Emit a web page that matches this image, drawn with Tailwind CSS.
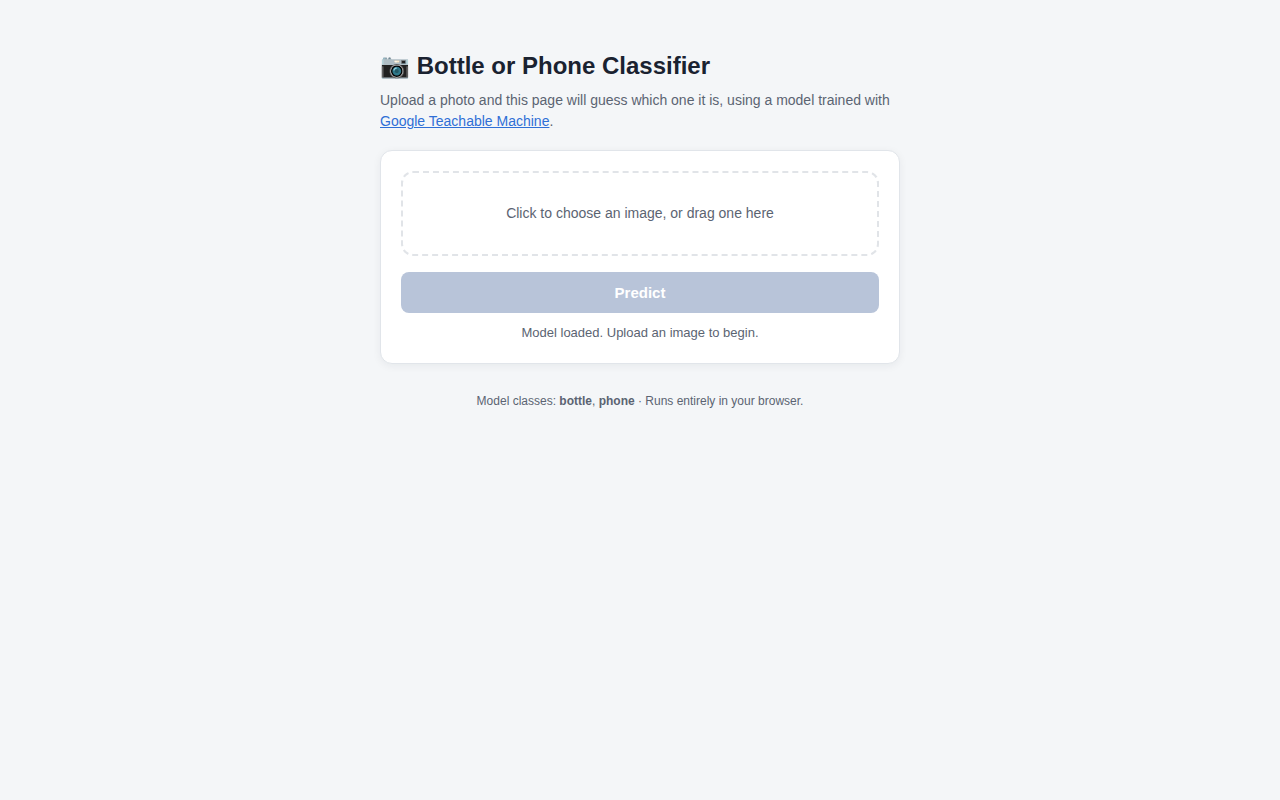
<!DOCTYPE html>
<html lang="en">
<head>
<meta charset="utf-8">
<meta name="viewport" content="width=device-width, initial-scale=1">
<title>Bottle or Phone Classifier</title>
<script src="https://cdn.jsdelivr.net/npm/@tailwindcss/browser@4"></script>
</head>
<body class="min-h-screen bg-[#f4f6f8] px-5 py-12 font-['Liberation_Sans',Arial,sans-serif] text-[#1a2230]">
<main class="mx-auto max-w-[520px]">
  <h1 class="mb-1.5 text-2xl/9 font-bold">📷 Bottle or Phone Classifier</h1>
  <p class="mb-[18px] text-sm/[21px] text-[#5b6472]">Upload a photo and this page will guess which one it is, using a model trained with <a href="#" class="text-[#2f6fd6] underline">Google Teachable Machine</a>.</p>
  <section class="rounded-xl border border-[#e1e5ea] bg-white p-5 shadow-[0_2px_8px_rgba(20,30,50,0.06)]">
    <label for="photo" class="block cursor-pointer rounded-xl border-2 border-dashed border-[#e1e4e8] px-4 py-[30px] text-center text-sm/[21px] text-[#5b6472]">Click to choose an image, or drag one here</label>
    <input id="photo" type="file" accept="image/*" class="hidden">
    <button type="button" disabled class="mt-4 block w-full rounded-lg bg-[#b8c4d9] py-3 text-[15px]/[17px] font-semibold text-white">Predict</button>
    <p class="mt-2.5 text-center text-[13px]/5 text-[#5b6472]">Model loaded. Upload an image to begin.</p>
  </section>
  <footer class="mt-7 text-center text-xs/[18px] text-[#5b6472]">Model classes: <strong>bottle</strong>, <strong>phone</strong> · Runs entirely in your browser.</footer>
</main>
</body>
</html>
